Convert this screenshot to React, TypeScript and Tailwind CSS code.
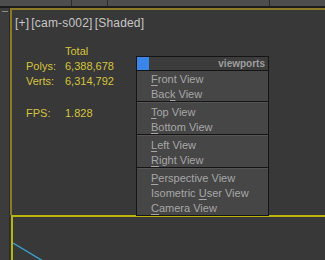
import type { ReactNode } from "react";

const items: { label: ReactNode }[][] = [
  [
    { label: <><u>F</u>ront View</> },
    { label: <>Bac<u>k</u> View</> },
  ],
  [
    { label: <><u>T</u>op View</> },
    { label: <><u>B</u>ottom View</> },
  ],
  [
    { label: <><u>L</u>eft View</> },
    { label: <><u>R</u>ight View</> },
  ],
  [
    { label: <><u>P</u>erspective View</> },
    { label: <>Isometric <u>U</u>ser View</> },
    { label: <><u>C</u>amera View</> },
  ],
];

function ViewportsMenu() {
  return (
    <div className="absolute left-[136px] top-[56px] w-[133px] border border-[#151515] bg-[#464646] font-['Liberation_Sans',sans-serif] text-[11px] text-[#a6a6a6]">
      <div className="flex h-[14px] items-center justify-between border-b border-[#151515] bg-[#3c3c3c]">
        <div className="h-[13px] w-[12px] bg-[#3a86e8]" />
        <span className="pr-[3px] text-[10px] font-bold text-[#9d9d9d]">viewports</span>
      </div>
      {items.map((group, gi) => (
        <div key={gi}>
          {gi > 0 && (
            <div className="h-[3px] border-t border-[#151515] bg-[#464646]">
              <div className="h-px bg-[#545454]" />
            </div>
          )}
          {group.map((it, i) => (
            <div key={i} className="h-[15px] pl-[14px] leading-[17px] [&_u]:underline-offset-2">
              {it.label}
            </div>
          ))}
        </div>
      ))}
    </div>
  );
}

export default function App() {
  return (
    <div className="relative flex h-[260px] w-[325px] flex-col overflow-hidden bg-[#383838] font-['Liberation_Sans',sans-serif]">
      {/* toolbar strip */}
      <div className="flex h-[6px] bg-[#4d4d4d]">
        <div className="w-[72px] border-r border-[#2a2a2a]" />
        <div className="w-[36px] border-r border-[#2a2a2a]" />
        <div className="w-[162px] border-r border-[#2a2a2a]" />
        <div className="flex-1" />
      </div>
      <div className="h-[2px] bg-[#1c1c1c]" />
      <div className="flex flex-1">
        {/* left gutter */}
        <div className="flex w-[10px] flex-col border-r border-[#2a2a2a] bg-[#3c3c3c]">
          <div className="mt-[3px] h-[1px] w-[6px] self-center bg-[#8a8a8a]" />
        </div>
        <div className="flex flex-1 flex-col">
          {/* upper viewport */}
          <div className="flex h-[207px] flex-col border-l-2 border-t-2 border-[#8c7a26] pl-[3px] pt-[5px]">
            <div className="flex gap-[2px] text-[12px] leading-[16px] tracking-[0.2px] text-[#c6c6c6]">
              <span>[+]</span>
              <span>[cam-s002]</span>
              <span>[Shaded]</span>
            </div>
            <div className="ml-[11px] mt-[13px] grid grid-cols-[39px_auto] text-[11px] leading-[15px] text-[#d6c43a]">
              <span />
              <span>Total</span>
              <span>Polys:</span>
              <span>6,388,678</span>
              <span>Verts:</span>
              <span>6,314,792</span>
              <span className="mt-[17px]">FPS:</span>
              <span className="mt-[17px]">1.828</span>
            </div>
          </div>
          {/* lower viewport */}
          <div className="relative ml-px flex-1 border-l-2 border-t-2 border-[#b9b40c]">
            <svg className="absolute left-0 top-0" width="60" height="50">
              <line x1="0" y1="26" x2="30" y2="44" stroke="#3aa6d8" strokeWidth="1.3" />
            </svg>
          </div>
        </div>
      </div>
      <ViewportsMenu />
    </div>
  );
}
